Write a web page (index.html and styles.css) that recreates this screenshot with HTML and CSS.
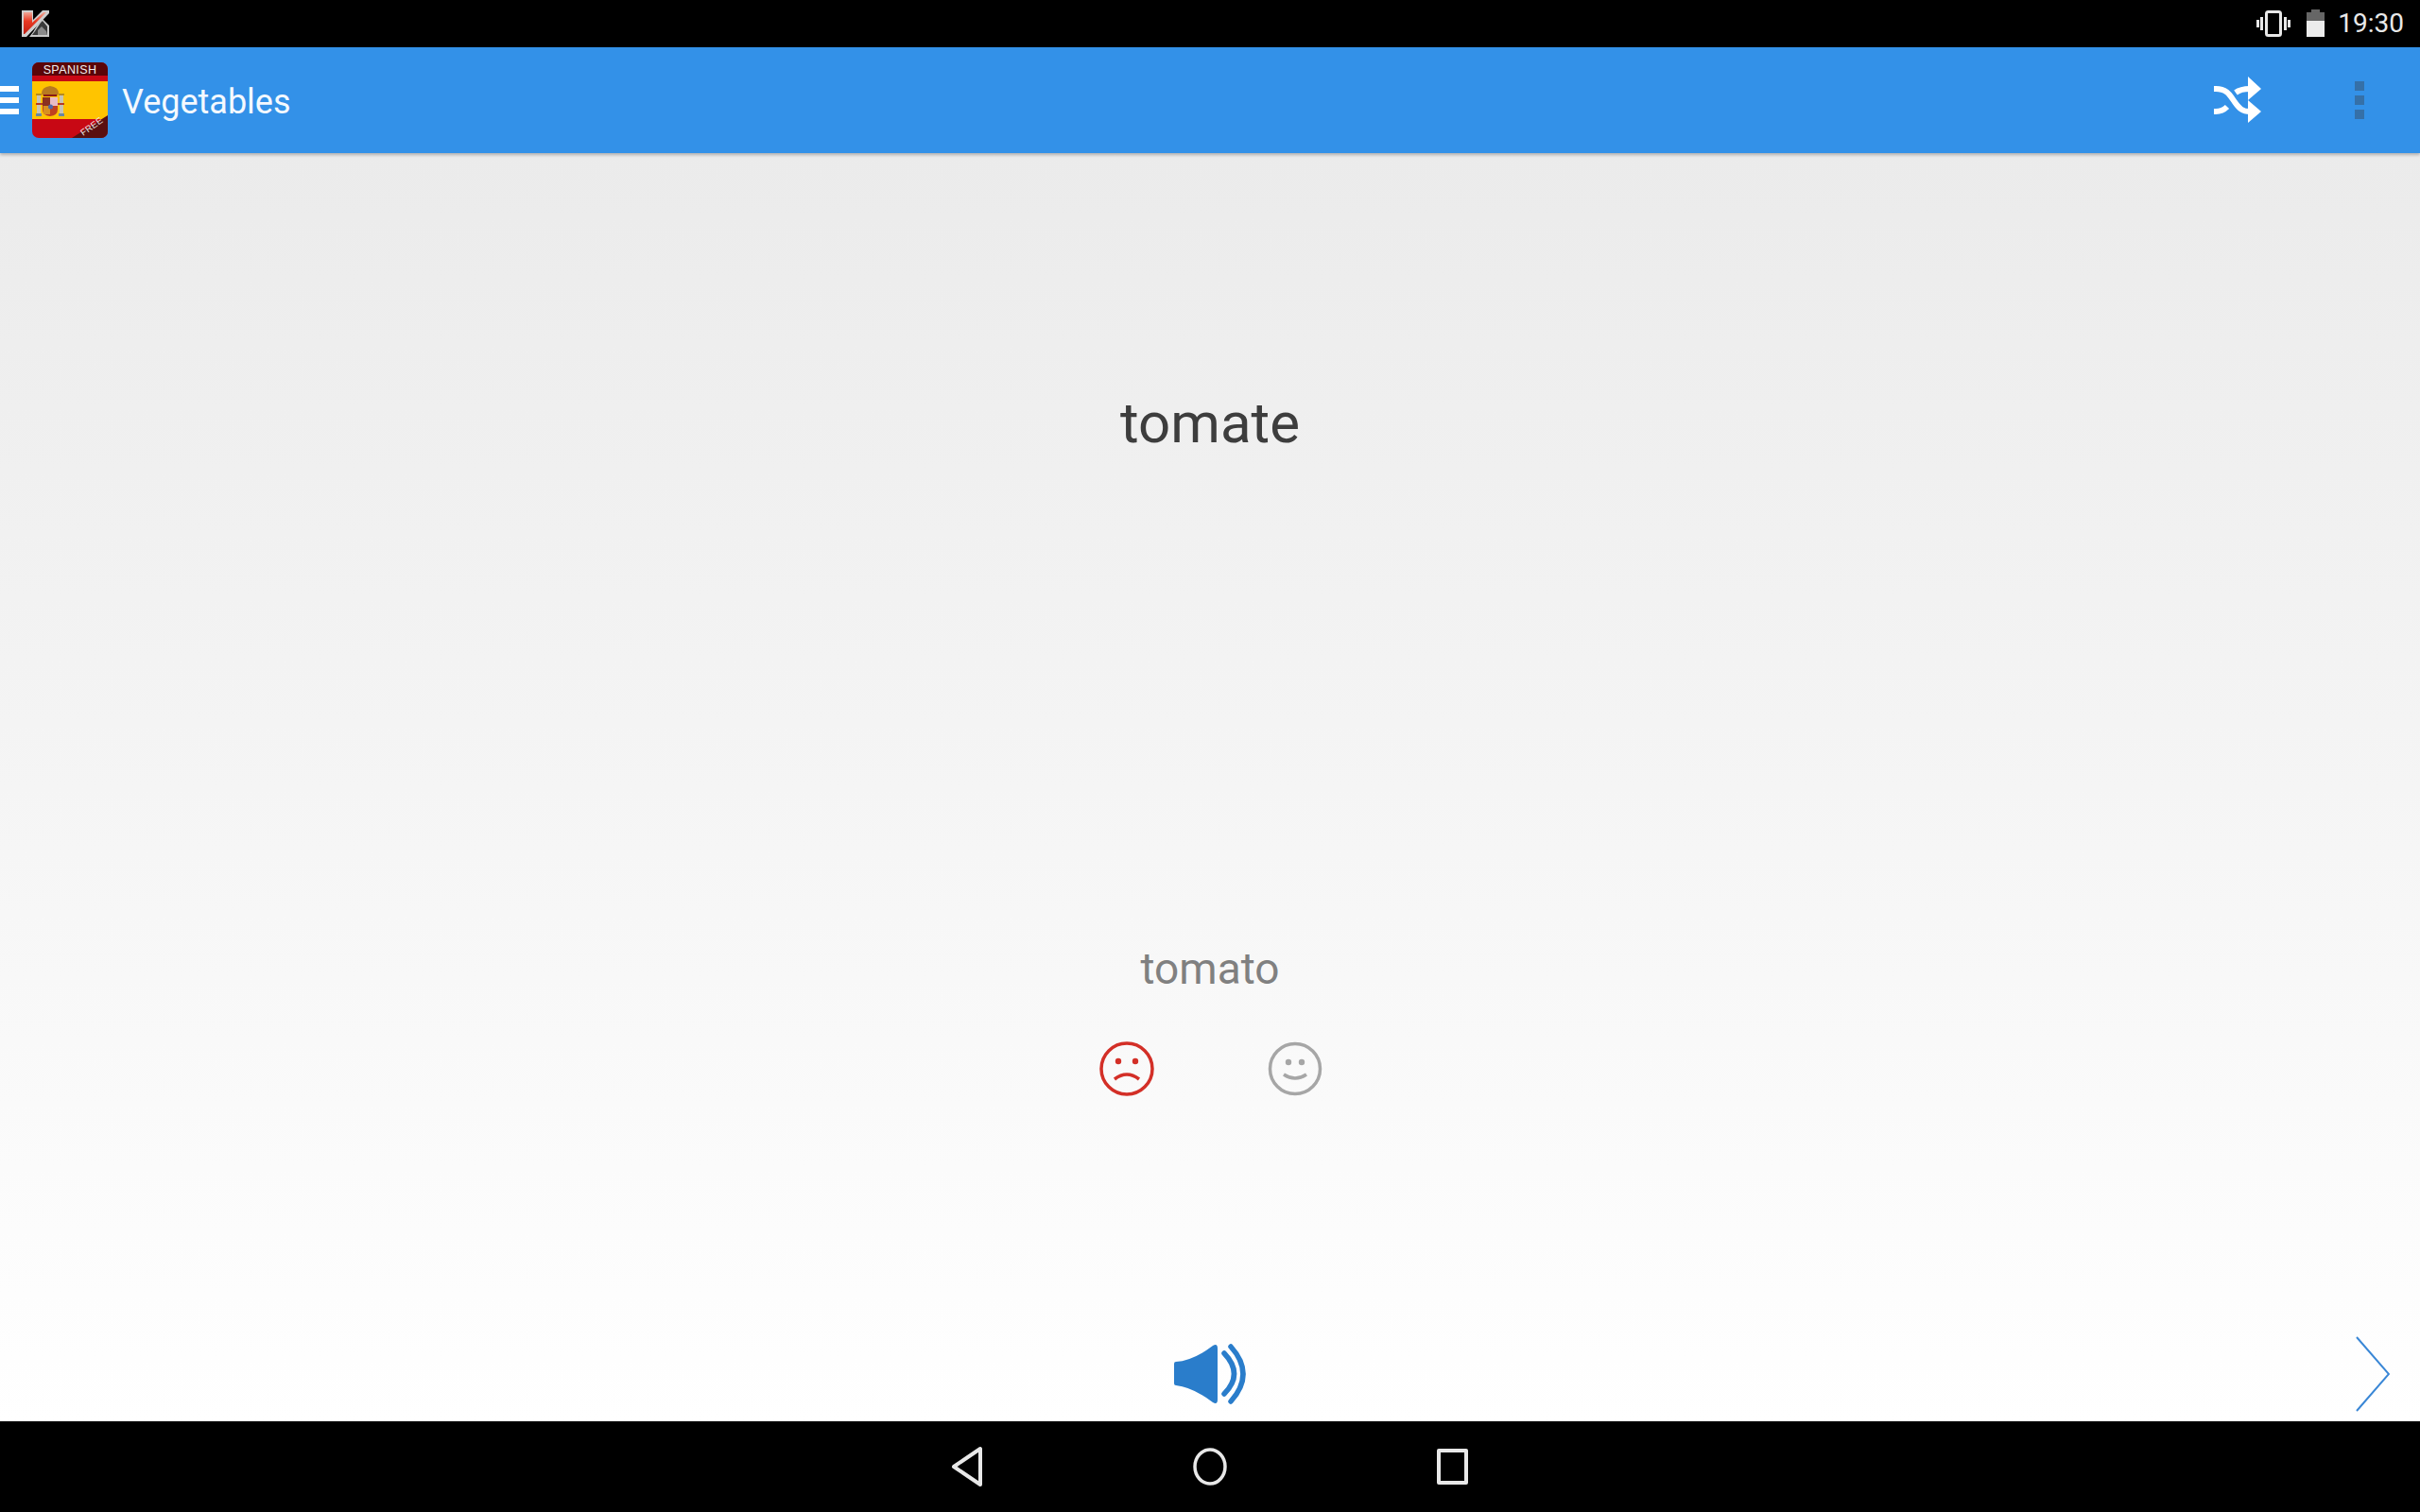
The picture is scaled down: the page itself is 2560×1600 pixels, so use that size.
FILE: index.html
```html
<!DOCTYPE html>
<html lang="en">
<head>
	<meta charset="UTF-8">
	<title>Vegetables</title>
	<link rel="stylesheet" href="styles.css">
</head>
<body>
	<div class="status">
		<svg class="kav" width="30" height="30" viewBox="0 0 30 30">
			<defs>
				<linearGradient id="kred" x1="0" y1="0" x2="0" y2="1">
					<stop offset="0" stop-color="#f0a898"/>
					<stop offset="0.4" stop-color="#e83a24"/>
					<stop offset="1" stop-color="#c02014"/>
				</linearGradient>
			</defs>
			<path d="M0 1H12V11L22 1H29V4L5 29H0Z" fill="#cfcfcf"/>
			<path d="M2 3H11V14L23 3H26L3 26H2Z" fill="url(#kred)"/>
			<path d="M18 14L22 10L29 17V29H8L12 24Z" fill="#c8c8c8"/>
			<path d="M20 14L22 12L27 18V27H11L14 23Z" fill="#3a3a3a"/>
			<path d="M17 22L21 18L26 23L27 27H17Z" fill="#8a8a8a"/>
		</svg>
		<div class="status-right">
			<svg width="36" height="28" viewBox="0 0 36 28" fill="none" stroke="#e8e8e8">
				<rect x="10.5" y="1.5" width="15" height="25" rx="2" stroke-width="3"/>
				<path d="M5.5 7V21M1.5 10V18M30.5 7V21M34.5 10V18" stroke-width="3"/>
			</svg>
			<svg class="batt" width="19" height="29" viewBox="0 0 19 29">
				<path d="M5 0H14V3H19V12H0V3H5Z" fill="#666"/>
				<rect y="12" width="19" height="17" fill="#ececec"/>
			</svg>
			<span class="time">19:30</span>
		</div>
	</div>

	<div class="appbar">
		<div class="burger"><i></i><i></i><i></i></div>
		<svg class="flag" width="80" height="80" viewBox="0 0 80 80">
			<defs>
				<clipPath id="round"><rect width="80" height="80" rx="7"/></clipPath>
			</defs>
			<g clip-path="url(#round)">
				<rect width="80" height="80" fill="#c80814"/>
				<rect width="80" height="14" fill="#5a0508"/>
				<rect y="20" width="80" height="40" fill="#ffc400"/>
				<!-- escudo -->
				<rect x="5" y="34" width="4" height="22" fill="#c8c4b4"/>
				<rect x="29" y="34" width="4" height="22" fill="#c8c4b4"/>
				<rect x="4" y="33" width="6" height="2" fill="#b88a20"/>
				<rect x="28" y="33" width="6" height="2" fill="#b88a20"/>
				<rect x="4" y="54" width="6" height="3" fill="#6a88a0"/>
				<rect x="28" y="54" width="6" height="3" fill="#6a88a0"/>
				<path d="M4 43H11V45H4ZM27 43H34V45H27Z" fill="#b83a24"/>
				<path d="M10 33Q10 26 19 25Q28 26 28 33L26 36H12Z" fill="#b87a20"/>
				<rect x="12" y="34" width="14" height="2" fill="#8a1a14"/>
				<path d="M11 37H27V50Q27 56 19 57Q11 56 11 50Z" fill="#c04020"/>
				<rect x="19" y="37" width="8" height="9" fill="#e8bcc4"/>
				<rect x="12" y="46" width="7" height="9" fill="#d89020"/>
				<rect x="11" y="37" width="8" height="9" fill="#8a3020"/>
				<circle cx="19.500" cy="47" r="2.500" fill="#5068a8"/>
				<path d="M42 80L80 56V80Z" fill="#5a0f10"/>
				<text class="flag-top" x="40" y="11.500">SPANISH</text>
				<text class="flag-free" transform="translate(54 78) rotate(-35)">FREE</text>
			</g>
		</svg>
		<div class="title">Vegetables</div>
		<svg class="shuffle" width="50" height="50" viewBox="0 0 50 50" fill="none" stroke="#fff" stroke-width="6">
			<path d="M0 13H2C14 13 17 20 22 27C27 34 30 37 38 37H42"/>
			<path d="M0 37H2C7 37 11 35 14 32"/>
			<path d="M23 17C27 14 31 13 38 13H42"/>
			<path d="M36 0L50 13L36 25Z" fill="#fff" stroke="none"/>
			<path d="M36 25L50 37L36 49Z" fill="#fff" stroke="none"/>
		</svg>
		<div class="more"><i></i><i></i><i></i></div>
	</div>

	<div class="card">
		<div class="word">tomate</div>
		<div class="meaning">tomato</div>
		<div class="faces">
			<svg width="60" height="60" viewBox="0 0 60 60" fill="none" stroke="#d32f27" stroke-width="3.500">
				<circle cx="30" cy="30" r="27"/>
				<circle cx="21" cy="22" r="3.200" fill="#d32f27" stroke="none"/>
				<circle cx="39" cy="22" r="3.200" fill="#d32f27" stroke="none"/>
				<path d="M17 41Q30 31 43 41"/>
			</svg>
			<svg width="58" height="58" viewBox="0 0 58 58" fill="none" stroke="#a6a6a6" stroke-width="3.500">
				<circle cx="29" cy="29" r="26.500"/>
				<circle cx="22" cy="22" r="3.200" fill="#a6a6a6" stroke="none"/>
				<circle cx="36" cy="22" r="3.200" fill="#a6a6a6" stroke="none"/>
				<path d="M17 35Q29 43 41 35"/>
			</svg>
		</div>
		<div class="bottom">
			<svg class="speaker" width="76" height="66" viewBox="0 0 76 66" fill="none" stroke="#2a7dcb" stroke-width="5.500" stroke-linecap="round">
				<path d="M2 20Q20 19 41 3Q46 0 46 6V60Q46 66 41 63Q20 47 2 45Q0 45 0 43V22Q0 20 2 20Z" fill="#2a7dcb" stroke="none"/>
				<path d="M53 11Q74 33 53 54"/>
				<path d="M60 4Q86 33 60 62"/>
			</svg>
			<svg class="next" width="36" height="80" viewBox="0 0 36 80" fill="none" stroke="#3a87d6" stroke-width="2">
				<path d="M1 1L35 40L1 79"/>
			</svg>
		</div>
	</div>

	<div class="nav">
		<svg width="34" height="44" viewBox="0 0 34 44" fill="none" stroke="#e8e8e8" stroke-width="4" stroke-linejoin="round">
			<path d="M31 3V41L3 22Z"/>
		</svg>
		<svg width="36" height="40" viewBox="0 0 36 40" fill="none" stroke="#e8e8e8" stroke-width="3.500">
			<ellipse cx="18" cy="20" rx="16" ry="18"/>
		</svg>
		<svg width="34" height="38" viewBox="0 0 34 38" fill="none" stroke="#e8e8e8" stroke-width="4" stroke-linejoin="round">
			<rect x="2" y="2" width="29" height="34"/>
		</svg>
	</div>
</body>
</html>
```

FILE: styles.css
```css
*{margin:0;padding:0;box-sizing:border-box;}
html,body{height:100%;overflow:hidden;}
body{width:2560px;height:1600px;display:flex;flex-direction:column;font-family:Roboto,"Liberation Sans",sans-serif;background:#fff;}
svg{display:block;flex:none;}

.status{height:50px;background:#000;display:flex;align-items:center;justify-content:space-between;padding:0 17px 0 23px;}
.status-right{display:flex;align-items:center;gap:17px;}
.time{font-size:28px;color:#e8e8e8;line-height:50px;margin-left:-3px;}
.batt{margin-top:-1px;}

.appbar{height:112px;background:#3391e8;display:flex;align-items:center;box-shadow:0 2px 3px rgba(0,0,0,0.25);position:relative;z-index:2;}
.burger{width:20px;margin-right:14px;display:flex;flex-direction:column;gap:6px;}
.burger i{display:block;height:6px;background:#fff;}
.title{font-size:36px;color:#f4f9fe;margin:3px 0 0 15px;flex:1;}
.shuffle{margin-right:99px;}
.more{display:flex;flex-direction:column;gap:5px;margin-right:59px;}
.more i{display:block;width:10px;height:10px;background:#3570a8;}

.card{flex:1;background:linear-gradient(#ebebeb,#fff);display:flex;flex-direction:column;align-items:center;padding-top:247px;}
.word{font-size:60px;line-height:78px;color:#3d3d3d;}
.meaning{font-size:46px;line-height:60px;color:#808080;margin-top:508px;}
.faces{display:flex;align-items:center;gap:119px;margin-top:46px;margin-left:1px;}
.bottom{margin-top:auto;width:100%;display:grid;grid-template-columns:1fr auto 1fr;align-items:center;height:100px;}
.speaker{grid-column:2;}
.next{grid-column:3;justify-self:end;margin-right:32px;}

.nav{height:96px;background:#000;display:flex;align-items:center;justify-content:center;gap:222px;}

.flag-top{font:12.500px "Liberation Sans",sans-serif;fill:#eee;text-anchor:middle;letter-spacing:0.4px;}
.flag-free{font:9.500px "Liberation Sans",sans-serif;fill:#e8e8e8;letter-spacing:0.3px;}
```
